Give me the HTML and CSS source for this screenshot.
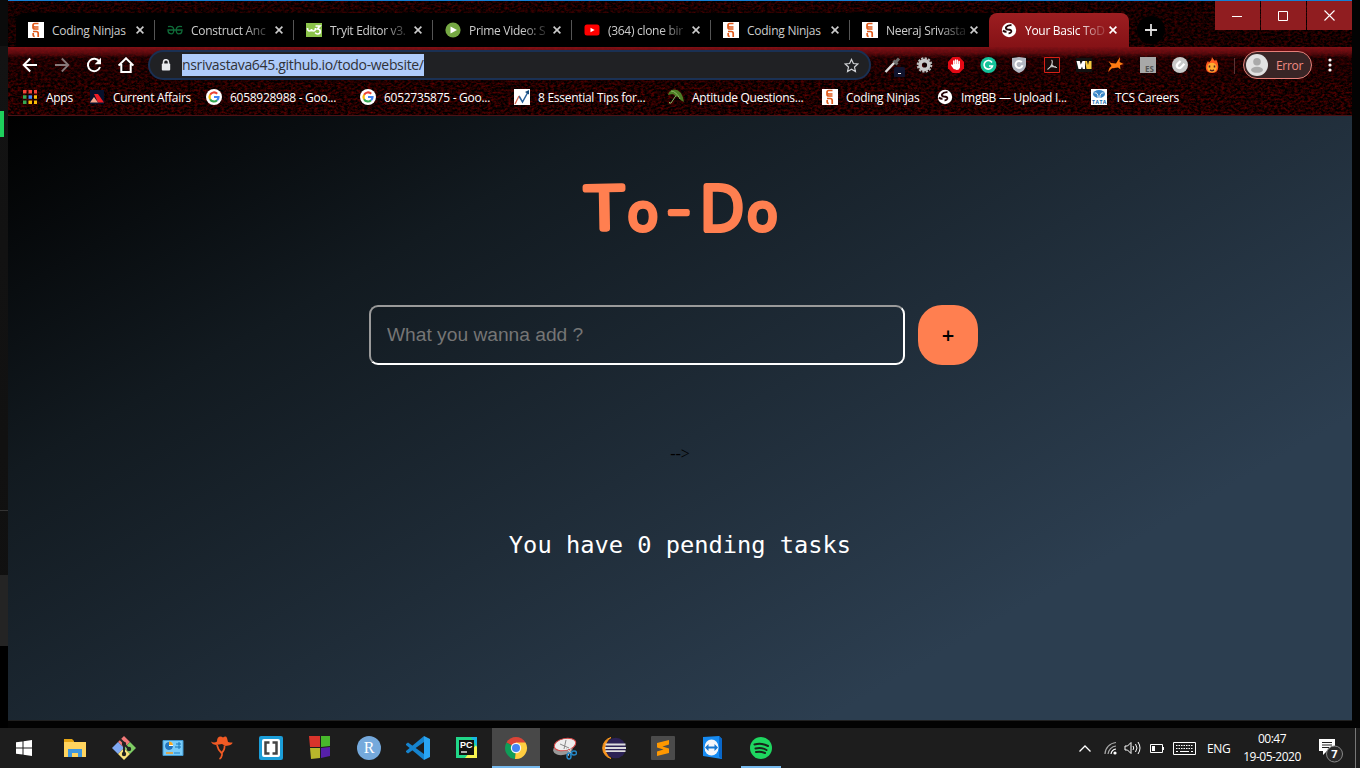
FILE: index.html
```
<!DOCTYPE html>
<html lang="en">
<head>
<meta charset="utf-8">
<title>Your Basic ToDo</title>
<link rel="stylesheet" href="styles.css">
</head>
<body>
<svg class="defs" width="0" height="0">
  <defs>
    <symbol id="ninja" viewBox="0 0 16 16"><path fill="#fff" d="M0 0h16v16H0z"/><path d="M10.500 1.500H6.800Q5 1.500 5 3.200T6.800 5h3.700M5 3.200V5.500Q5 7 6.800 7h3.700M5 9.500h3.200q2 0 2 2V15M5.200 11v2.200q0 1.200 1.500 1.200" fill="none" stroke="#e05a1c" stroke-width="1.700"/></symbol>
    <symbol id="globe" viewBox="0 0 16 16"><circle cx="8" cy="8" r="7.200" fill="#fff"/><path d="M10.500 3.200Q6.500 2.800 5 5.200q-.6 2 2 2.300 3.600.1 3.300 2.200-.6 1.700-2.700 1.500M2 8.500q1.500 1.500 3.500 1.300" fill="none" stroke="#250507" stroke-width="1.900"/></symbol>
    <symbol id="google" viewBox="0 0 16 16"><circle cx="8" cy="8" r="8" fill="#fff"/><g fill="none" stroke-width="2.200"><path stroke="#ea4335" d="M4.100 5.800A4.500 4.500 0 0 1 11.200 4.700"/><path stroke="#fbbc05" d="M4.100 5.800a4.500 4.500 0 0 0 0 4.400"/><path stroke="#34a853" d="M4.100 10.200a4.500 4.500 0 0 0 7 1.100"/><path stroke="#4285f4" d="M11.100 11.300A4.400 4.400 0 0 0 12.500 8H8"/></g></symbol>
    <symbol id="close" viewBox="0 0 8 8"><path d="M.6.6l6.800 6.800M7.400.6L.6 7.400" stroke="currentColor" stroke-width="1.600"/></symbol>
  </defs>
</svg>
<div class="screen">
  <div class="desktop">
    <div class="edge edge-left"><i class="green"></i><i class="line"></i><i class="block"></i></div>
    <main class="window">
      <header class="chrome">
        <svg class="texture" width="1344" height="115">
          <filter id="grain" x="0" y="0" width="100%" height="100%" color-interpolation-filters="sRGB"><feTurbulence type="fractalNoise" baseFrequency=".3 .45" numOctaves="4" seed="8"/><feColorMatrix values=".75 0 0 0 -.26  0 0 0 0 0  0 0 0 0 0  0 0 0 0 1"/></filter>
          <rect width="1344" height="115" filter="url(#grain)"/>
        </svg>
        <div class="tabstrip">
          <nav class="tabs">
            <div class="tab"><svg class="fav"><use href="#ninja"/></svg><span class="title">Coding Ninjas</span><svg class="x"><use href="#close"/></svg></div>
            <div class="tab"><svg class="fav" viewBox="0 0 16 16"><path d="M1 4.700Q6.800 3.500 6.800 8T3.500 11.700Q1 11.500 1 8h14q0 3.700-2.500 3.700Q9.200 12.500 9.200 8T15 4.700" fill="none" stroke="#0f6b38" stroke-width="1.300"/></svg><span class="title fade">Construct Anc</span><svg class="x"><use href="#close"/></svg></div>
            <div class="tab"><svg class="fav" viewBox="0 0 16 16"><path fill="#8bc34a" d="M0 1h16v14H0z"/><path d="M1.500 6q0 3 2 3t2-2q0 2 2 2t2-3M9.500 4H14l-2.700 3q3 0 3 2.400T11.500 12q-1.500 0-2.300-1.300" fill="none" stroke="#fff" stroke-width="1.600"/></svg><span class="title fade">Tryit Editor v3.</span><svg class="x"><use href="#close"/></svg></div>
            <div class="tab"><svg class="fav" viewBox="0 0 16 16"><circle cx="8" cy="8" r="7.600" fill="#75a843"/><path fill="#fff" d="M5.500 4.400L12 8l-6.500 3.600z"/></svg><span class="title fade">Prime Video: S</span><svg class="x"><use href="#close"/></svg></div>
            <div class="tab"><svg class="fav" viewBox="0 0 16 16"><rect x=".5" y="2.500" width="15" height="11" rx="2.500" fill="#f00"/><path fill="#fff" d="M6.500 5.700L10.700 8l-4.200 2.300z"/></svg><span class="title fade">(364) clone bir</span><svg class="x"><use href="#close"/></svg></div>
            <div class="tab"><svg class="fav"><use href="#ninja"/></svg><span class="title">Coding Ninjas</span><svg class="x"><use href="#close"/></svg></div>
            <div class="tab last"><svg class="fav"><use href="#ninja"/></svg><span class="title fade">Neeraj Srivasta</span><svg class="x"><use href="#close"/></svg></div>
            <div class="tab active"><svg class="fav"><use href="#globe"/></svg><span class="title fade">Your Basic ToD</span><svg class="x"><use href="#close"/></svg></div>
          </nav>
          <div class="newtab"><svg width="12" height="12"><path d="M6 0v12M0 6h12" stroke="#ddd" stroke-width="1.800"/></svg></div>
          <div class="controls">
            <b><svg width="10" height="10"><path d="M0 5.500h10" stroke="#fff"/></svg></b>
            <b><svg width="10" height="10"><path d="M.5.5h9v9h-9z" fill="none" stroke="#fff"/></svg></b>
            <b><svg width="11" height="11"><path d="M.5.5l10 10M10.500.5l-10 10" stroke="#fff" stroke-width="1.100"/></svg></b>
          </div>
        </div>
        <div class="toolbar">
          <div class="navs">
            <svg viewBox="0 0 16 16"><path d="M15 8H2M8.200 1.500L1.700 8l6.500 6.500" fill="none" stroke="#fff" stroke-width="2"/></svg>
            <svg viewBox="0 0 16 16"><path d="M1 8h13M7.800 1.500L14.300 8l-6.500 6.500" fill="none" stroke="#88797a" stroke-width="1.800"/></svg>
            <svg viewBox="0 0 16 16"><path d="M13.400 4.700A6.200 6.200 0 1 0 14 10" fill="none" stroke="#fff" stroke-width="2"/><path fill="#fff" d="M15 .8v6.400H8.700z"/></svg>
            <svg viewBox="0 0 16 16"><path d="M.6 8.500L8 1.300l7.400 7.200M3.300 7v8h9.400V7" fill="none" stroke="#fff" stroke-width="2"/></svg>
          </div>
          <div class="omnibox">
            <svg class="lock" width="10" height="12"><path d="M2.500 5V3.200a2.500 2.500 0 0 1 5 0V5" fill="none" stroke="#e8eaed" stroke-width="1.500"/><rect x=".8" y="4.500" width="8.400" height="7" rx="1" fill="#e8eaed"/></svg>
            <span class="url">nsrivastava645.github.io/todo-website/</span>
            <svg class="star" width="15" height="15" viewBox="0 0 16 16"><path d="M8 1.500l2 4.400 4.700.5-3.500 3.200 1 4.800L8 12l-4.200 2.400 1-4.800L1.300 6.400 6 5.900z" fill="none" stroke="#d0d2d5" stroke-width="1.300"/></svg>
          </div>
          <div class="exts">
            <svg viewBox="0 0 24 24"><path d="M4.500 19L14 9" stroke="#ddd" stroke-width="2.500"/><path d="M12.500 7.500l4 4M14 10l4-4.500" stroke="#6c6c6c" stroke-width="3"/><rect x="13" y="14" width="11" height="11" rx="2" fill="#11142e"/><path d="M17 20.500h3" stroke="#fff"/></svg>
            <svg viewBox="0 0 24 24"><circle cx="11.500" cy="12" r="6.800" fill="none" stroke="#bbb" stroke-width="2" stroke-dasharray="2.200 1.360"/><circle cx="11.500" cy="12" r="4.400" fill="none" stroke="#c8c8c8" stroke-width="3.600"/></svg>
            <svg viewBox="0 0 24 24"><path d="M7.700 4h6.600L19 8.700v6.600L14.300 20H7.700L3 15.300V8.700z" fill="#e50914"/><path d="M8.800 12V8M10.600 12V7M12.400 12V7.300M14.200 13V8.500M6.800 12l2.500 3.500" stroke="#fff" stroke-width="1.500" stroke-linecap="round"/><path fill="#fff" d="M8 11h7v3.500q-1 2.700-3.400 2.500-2 0-3.600-3z"/></svg>
            <svg viewBox="0 0 24 24"><circle cx="11.500" cy="12" r="8" fill="#15c39a"/><path d="M15 9.500A4.300 4.300 0 1 0 15.500 13H12" fill="none" stroke="#fff" stroke-width="1.600"/></svg>
            <svg viewBox="0 0 24 24"><path d="M3 5l7-1 7 1v7q0 5-7 8-7-3-7-8z" fill="#b4b8c2"/><path d="M12.800 9.200a3.500 3.500 0 1 0 .7 3" fill="none" stroke="#fff" stroke-width="2"/></svg>
            <svg viewBox="0 0 24 24"><path d="M4.500 4.500h15v15h-15z" fill="#180909" stroke="#d82016"/><path d="M11.500 7q1.500 1 .3 4.500Q11 14 7.500 16.500M11.800 11.500q1.500 3 5.200 3M9 14.500q3-1.500 7-.8" fill="none" stroke="#ccc" stroke-width="1.100"/></svg>
            <svg viewBox="0 0 24 24"><path fill="#111" d="M4 5h16v14H4z"/><path fill="#fff" d="M4.500 8h3.300l1 3.500L10.500 8H13v8h-2.200l-.8-2.500L9 16H6.500z"/><path fill="#f7c93e" d="M13 8h2l1 4 1-4h2.500v8h-5z"/></svg>
            <svg viewBox="0 0 24 24"><path fill="#ff7a12" d="M4.500 8l2.500 2 5 .5 4-6.500-.4 5 4 2-3.600 1.200.5 4.300-2.500-2-6 .8-4 3.700 1.500-4 2-2z"/></svg>
            <svg viewBox="0 0 24 24"><path fill="#a8a8a8" d="M4 4h16v16H4z"/><text x="9" y="18.500" class="es">ES</text></svg>
            <svg viewBox="0 0 24 24"><circle cx="12" cy="12" r="8" fill="#c9c9c9"/><path d="M12.500 8l-3 3q-1.500 2 .3 3.600 1.700 1.200 3.400-.4l3.200-3.400" fill="none" stroke="#fff" stroke-width="2.300"/></svg>
            <svg viewBox="0 0 24 24"><path fill="#ff5a1f" d="M12 4q1 2 3 4l1-1.500Q19 11 18 16q-1 4-6 4t-6-4q-1-4 2-8l1 1.500Q12 7 12 4z"/><circle cx="12" cy="14.500" r="4.800" fill="#ffac31"/><path d="M9.500 12.500v2M14.500 12.500v2M10 17q2 1.300 4 0" fill="none" stroke="#522" stroke-width="1.500"/></svg>
          </div>
          <div class="profile"><svg width="22" height="22"><circle cx="11" cy="11" r="11" fill="#e1e1e1"/><circle cx="11" cy="7.700" r="3.800" fill="#aaa"/><ellipse cx="11" cy="15.800" rx="6" ry="3" fill="#aaa"/></svg><span>Error</span></div>
          <svg class="dots" width="4" height="14"><g fill="#fff"><circle cx="2" cy="2" r="1.600"/><circle cx="2" cy="7" r="1.600"/><circle cx="2" cy="12" r="1.600"/></g></svg>
        </div>
        <div class="bookmarks">
          <a><svg viewBox="0 0 16 16"><path fill="#f44336" d="M1 1h3.500v3.500H1zM6.500 1H10v3.500H6.500zM12 1h3v3.500h-3z"/><path fill="#35a852" d="M1 6.300h3.500v3.500H1zM1 11.500h3.500V15H1z"/><path fill="#4285f4" d="M6.500 6.300H10v3.500H6.500z"/><path fill="#fbbc05" d="M12 6.300h3v3.500h-3zM6.500 11.500H10V15H6.500zM12 11.500h3V15h-3z"/></svg><span>Apps</span></a>
          <a><svg viewBox="0 0 16 16"><path fill="#07102b" d="M1 1h14v14H1z"/><path fill="#ee1c25" d="M5 5h4l6 8.500H9z"/><path fill="#f5a58b" d="M5 8l4 5.500H1z"/></svg><span>Current Affairs</span></a>
          <a><svg><use href="#google"/></svg><span>6058928988 - Goo...</span></a>
          <a><svg><use href="#google"/></svg><span>6052735875 - Goo...</span></a>
          <a><svg viewBox="0 0 16 16"><path fill="#fff" d="M0 0h16v16H0z"/><path d="M5 7l3.500 6L14 3" fill="none" stroke="#28609a" stroke-width="1.500"/><path d="M1 15l4-8" fill="none" stroke="#d26650" stroke-width="1.200"/><path fill="#164b7c" d="M15 1v4.500L11 3z"/></svg><span>8 Essential Tips for...</span></a>
          <a><svg viewBox="0 0 16 16"><path fill="#4d7d25" d="M0 6Q1 1 6 .5q8 0 10 12.500l-3.500-2-1.500-3-3-.5L5 5 2 5.500z"/><path d="M8 6.500l-5 7.500q-2 1-1.500-1M3 2q5 0 9 8" fill="none" stroke="#8cb663"/></svg><span>Aptitude Questions...</span></a>
          <a><svg><use href="#ninja"/></svg><span>Coding Ninjas</span></a>
          <a><svg><use href="#globe"/></svg><span>ImgBB — Upload I...</span></a>
          <a><svg viewBox="0 0 16 16"><path fill="#fff" d="M0 0h16v16H0z"/><ellipse cx="8" cy="5" rx="6" ry="4" fill="#3b87c8"/><path d="M3.500 4Q7 3 7.200 9M12.500 4Q9 3 8.800 9" fill="none" stroke="#fff" stroke-width=".9"/><text x="1" y="14.700" class="tata" textLength="14">TATA</text></svg><span>TCS Careers</span></a>
        </div>
      </header>
      <section class="page">
        <h1 class="heading">
          <svg width="210" height="70">
            <text transform="translate(11.500 53) rotate(-1) scale(1.180 1)" class="cap">T</text>
            <text transform="translate(53.500 54) scale(1.040 1.020)">o</text>
            <text transform="translate(92.500 54) scale(1 .9)" class="dash">-</text>
            <text transform="translate(125.500 54) scale(1.030 1.030)" class="cap">D</text>
            <text transform="translate(173 54) scale(1.040 1.020)">o</text>
          </svg>
        </h1>
        <form class="add"><input type="text" placeholder="What you wanna add ?"><button type="button">+</button></form>
        <p class="arrow">--&gt;</p>
        <p class="pending">You have 0 pending tasks</p>
      </section>
    </main>
  </div>
  <footer class="taskbar">
    <div class="apps">
      <i><svg viewBox="0 0 24 24"><path fill="#fff" d="M4 6.300l6.500-.9v6.100H4zM11.500 5.200L20 4v7.500h-8.500zM4 12.500h6.500v6.100L4 17.700zM11.500 12.500H20V20l-8.500-1.200z"/></svg></i>
      <i><svg viewBox="0 0 24 24"><path fill="#e6a514" d="M1 3h8l2 2v3H1z"/><path fill="#ffd45e" d="M1 6h22v15H1z"/><path fill="#3f97dd" d="M5 13h14v8h-4v-4H9v4H5z"/></svg></i>
      <i><svg viewBox="0 0 24 24"><path fill="#f27978" d="M12 0l6 6-6 6-6-6z"/><path fill="#80a9f3" d="M6 6l6 6-6 6-6-6z"/><path fill="#7fcc64" d="M18 6l6 6-6 6-6-6z"/><path fill="#fbe27b" d="M12 12l6 6-6 6-6-6z"/><path d="M8 3l4 4v11M12 8l5 5" fill="none" stroke="#262626" stroke-width="2"/><circle cx="12" cy="8" r="2.200" fill="#222"/><circle cx="17" cy="13" r="2.200" fill="#222"/><circle cx="12" cy="18" r="2.200" fill="#222"/></svg></i>
      <i><svg viewBox="0 0 24 24"><path fill="#79ccfa" stroke="#4099d1" d="M2 4.500h20v15H2z"/><circle cx="8" cy="10" r="4" fill="#fff"/><path d="M8 10V6a4 4 0 1 0 4 4z" fill="#2175be"/><path d="M8 9V5.500A4 4 0 0 1 12 9z" fill="#f7aa24"/><path d="M15 8h5M14 11h6M18 6v7" stroke="#1976b8"/><path d="M5 17h7" stroke="#f39b22" stroke-width="1.500"/><path d="M13 17h6" stroke="#237fc0"/></svg></i>
      <i><svg viewBox="0 0 24 24"><path fill="#f15a24" d="M1 5.500q3 2 6 0 0-4.500 3-5 2 0 3 1 3-2 4 .5l1 4q2 .5 4.500.5 0 2-4 3l-3 .5L12 8 6 9Q2 8.500 1 5.500z"/><path d="M7 9q1 5 4.500 8Q15 14 14.500 9.500M12 16v3q-.5 3-2.500 4" fill="none" stroke="#f15a24" stroke-width="1.700"/></svg></i>
      <i><svg viewBox="0 0 24 24"><rect width="24" height="24" rx="2" fill="#1b9ed9"/><rect x="3" y="3" width="18" height="18" rx="2" fill="#fff"/><path d="M10.500 6.500h-4v11h4M13.500 6.500h4v11h-4" fill="none" stroke="#454545" stroke-width="2.500"/></svg></i>
      <i><svg viewBox="0 0 24 24"><path fill="#d9342b" d="M1 0h11v11H2z"/><path fill="#48b82b" d="M13 0h9v10l-9 1z"/><path fill="#b9b72b" d="M2 12h10v10l-9 1z"/><path fill="#5620a8" d="M13 12l9-1v9l-9 2z"/></svg></i>
      <i><svg viewBox="0 0 24 24"><circle cx="12" cy="12" r="12" fill="#75a9dc"/><text x="12" y="17" class="r">R</text></svg></i>
      <i><svg viewBox="0 0 24 24"><path fill="#1684cf" d="M0 8l2-1.500L18 18v6L0 9z"/><path fill="#1684cf" d="M0 16l2 1.500L18 6V0L0 15z"/><path fill="#29a5f3" d="M18 0l6 3v18l-6 3z"/></svg></i>
      <i><svg viewBox="0 0 24 24"><path fill="#21d789" d="M1 1h21v21H1z"/><path fill="#f7f34f" d="M22 8v14H10z"/><path fill="#18b7e6" d="M16 1h6v10z"/><path fill="#111" d="M4 4h15v15H4z"/><text x="5" y="11.500" class="pc">PC</text><path d="M6 16h6" stroke="#fff" stroke-width="1.300"/></svg></i>
      <i class="current"><svg viewBox="0 0 24 24"><path fill="#db4437" d="M12 12L2.500 6.500a11 11 0 0 1 19 0z"/><path fill="#0f9d58" d="M12 12l-1 11A11 11 0 0 1 2.500 6.500z"/><path fill="#ffcd40" d="M12 12V6.500h9.500A11 11 0 0 1 11 23z"/><circle cx="12" cy="12" r="5.200" fill="#f5f5f5"/><circle cx="12" cy="12" r="4" fill="#4285f4"/></svg></i>
      <i><svg viewBox="0 0 24 24"><ellipse cx="10" cy="13" rx="10" ry="6" fill="#999" transform="rotate(-12 10 13)"/><ellipse cx="12" cy="8.500" rx="11" ry="6" fill="#eee" stroke="#d94a4a" transform="rotate(-12 12 8.500)"/><path d="M7 8l9 4M13 4l-2 9" stroke="#888"/><path d="M13 12l7 7M18 12l-3 8" stroke="#ccc"/><ellipse cx="16" cy="20" rx="2" ry="3" fill="none" stroke="#2688c8" stroke-width="1.500"/><ellipse cx="21" cy="17" rx="2.500" ry="2" fill="none" stroke="#2688c8" stroke-width="1.500"/></svg></i>
      <i><svg viewBox="0 0 24 24"><path d="M9 1.500A10.800 10.800 0 0 0 9 22.500 12.500 12.500 0 0 1 9 1.500z" fill="#f7941e" stroke="#f7941e"/><circle cx="13.700" cy="12" r="10.300" fill="#2c2255"/><path fill="#ddd" d="M3.500 7.500h20v2h-20zM3 11h21v2H3zM3.500 14.300h20v1.700h-20z"/></svg></i>
      <i><svg viewBox="0 0 24 24"><rect width="24" height="24" rx="1" fill="#4b4b4b"/><path fill="#ff9800" d="M6 7l12-3v4.500L11.500 10.500 18 12.500V17L6 20v-4.500l6.500-2L6 11.500z"/></svg></i>
      <i><svg viewBox="0 0 24 24"><path fill="#168bf2" d="M3 1l16-1 3 3v20L3 20z"/><path fill="#0967c9" d="M19 0l3 3v20l-3-2z"/><ellipse cx="11.500" cy="11.500" rx="7" ry="8" fill="#f4f6fa"/><path fill="#1576d1" d="M5 11.500l3.500-3.500v2.500h6V8l3.500 3.500-3.500 3.500v-2.500h-6V15z"/></svg></i>
      <i class="running"><svg viewBox="0 0 24 24"><circle cx="12" cy="12" r="11" fill="#1ed760"/><path d="M5.500 8.500q7-2 13.500 1.500M6.500 12.500q6-1.500 11 1.500M7 16q5-1 9 1" fill="none" stroke="#18251b" stroke-width="2" stroke-linecap="round"/></svg></i>
    </div>
    <div class="tray">
      <svg width="12" height="7"><path d="M.5 6.500l5.500-5.500 5.500 5.500" fill="none" stroke="#fff" stroke-width="1.300"/></svg>
      <svg class="wifi" width="13" height="14"><g fill="none" stroke="#aaa" stroke-width="1.200"><path d="M1 13A12 12 0 0 1 12 1.500M4 13a9 9 0 0 1 8-8"/><path stroke="#fff" d="M7 13a6 6 0 0 1 5-5"/></g><circle cx="11" cy="12" r="1.600" fill="#fff"/></svg>
      <svg class="sound" width="17" height="14"><path d="M1 5h2.500L7 1.500v11L3.500 9H1zM9 5q1.500 2 0 4M11.500 3q3 4 0 8M14 1q4 6 0 12" fill="none" stroke="#fff"/></svg>
      <svg class="battery" width="15" height="9"><path d="M.5.5h12v8H.5zM13.500 3v3" fill="none" stroke="#fff"/><path fill="#fff" d="M2 2h3v5H2z"/></svg>
      <svg class="keyboard" width="23" height="13"><path d="M.5.5h22v12H.5z" fill="none" stroke="#fff"/><path d="M3 3.500h17M3 6.500h17" stroke="#fff" stroke-dasharray="1.500 1"/><path d="M3 9.500h2M7 9.500h9M18 9.500h2" stroke="#fff"/></svg>
      <span class="lang">ENG</span>
      <time class="clock"><span>00:47</span><span>19-05-2020</span></time>
      <svg class="notify" width="26" height="26"><path fill="#fff" d="M0 1h16v12H8l-4 4v-4H0z"/><path d="M3 4.500h10M3 7h10M3 9.500h7" stroke="#222"/><circle cx="15.500" cy="16" r="8" fill="#292929" stroke="#888"/><text x="15.500" y="20" class="badge">7</text></svg>
      <i class="peek"></i>
    </div>
  </footer>
</div>
</body>
</html>
```
FILE: styles.css
```
* { box-sizing: border-box; }
body { margin: 0; background: #000; font-family: "Open Sans", "Noto Sans", sans-serif; font-size: 12px; color: #fff; overflow: hidden; }
svg { display: block; flex: none; }
.defs { position: absolute; }
.screen { width: 1360px; height: 768px; display: flex; flex-direction: column; }
.desktop { height: 728px; display: flex; background: #030303; }
.edge-left { width: 8px; height: 728px; background: linear-gradient(#0b0b0b 46px, #131313 46px, #101010 646px, #000 646px); }
.edge-left i { display: block; }
.edge-left .green { width: 4px; height: 26px; margin-top: 111px; background: #1ed05c; }
.edge-left .line { height: 1px; margin-top: 373px; background: #333; }
.edge-left .block { height: 71px; margin-top: 64px; background: #242424; }
.window { width: 1344px; height: 721px; border-bottom: 1px solid #202020; }

.chrome { position: relative; height: 116px; background: #0a0001; border-top: 1px solid #1580d5; display: flex; flex-direction: column; }
.texture { position: absolute; left: 0; top: 0; height: 115px; }
.tabstrip, .toolbar, .bookmarks { position: relative; display: flex; }
.chrome::after { content: ""; position: absolute; inset: auto 0 0; height: 1px; background: #4a1215; }
.tabstrip { height: 46px; padding-left: 8px; align-items: flex-end; background: linear-gradient(90deg, #0004, #0003 60%, #0004); }
.tabs { display: flex; height: 34px; background: #000; border-radius: 8px 8px 0 0; }
.tab { position: relative; width: 139px; height: 34px; padding-left: 12px; display: flex; align-items: center; color: #ccc; border-radius: 8px 8px 0 0; }
.tab:not(.last):not(.active)::after { content: ""; position: absolute; right: 0; top: 7px; width: 1px; height: 20px; background: #555; }
.fav { width: 16px; height: 16px; margin-right: 8px; }
.title { width: 80px; margin-right: 4px; white-space: nowrap; letter-spacing: -.25px; }
.fade { letter-spacing: -.3px; -webkit-mask-image: linear-gradient(90deg, #000 66%, #0003 96%); mask-image: linear-gradient(90deg, #000 66%, #0003 96%); }
.x { width: 8px; height: 8px; }
.tab.active { width: 140px; color: #fff; background: linear-gradient(#9d1e21, #851216); }
.newtab { width: 28px; height: 28px; margin: 0 0 3px 8px; background: #000; border-radius: 50%; display: flex; align-items: center; justify-content: center; }
.controls { display: flex; margin-left: auto; align-self: flex-start; gap: 1px; height: 29px; }
.controls b { width: 45px; background: #901d20; display: flex; align-items: center; justify-content: center; }
.controls b:first-child svg { margin-right: 2px; }
.controls b:nth-child(2) svg { margin-right: 2px; }

.toolbar { height: 36px; align-items: center; background: linear-gradient(#8c1218e6, #700d12c0 6px, #28000360 11px, #10000130 100%); }
.navs { display: flex; gap: 16px; padding-left: 14px; }
.navs svg { width: 16px; height: 16px; }
.omnibox { width: 723px; height: 30px; margin-left: 14px; border: 2px solid #1a3053; border-radius: 15px; background: #202124; display: flex; align-items: center; padding: 0 10px 0 11px; }
.url { height: 22px; line-height: 22px; font-size: 14px; letter-spacing: -.33px; background: #aecbfa; color: #303238; margin-left: 11px; white-space: nowrap; width: 242px; }
.star { margin-left: auto; }
.exts { display: flex; gap: 7.900px; margin-left: 10px; }
.exts svg { width: 24px; height: 24px; }
.es { font: bold 8px "Open Sans", sans-serif; fill: #555; }
.profile { width: 69px; height: 28px; margin-left: 19px; border: 1px solid #e68079; border-radius: 14px; background: #392526; display: flex; align-items: center; padding-left: 2px; color: #f28b82; position: relative; }
.profile::before { content: ""; position: absolute; left: -10px; top: 6px; width: 1px; height: 16px; background: #5a3436; }
.profile span { margin-left: 8px; letter-spacing: -.3px; }
.dots { margin-left: 16px; }
.bookmarks { height: 32px; display: grid; grid-template-columns: 67px 117px 154px 154px 154px 154px 115px 154px 110px; padding: 0 0 4px 14px; align-items: center; }
.bookmarks a { display: flex; align-items: center; gap: 8px; white-space: nowrap; letter-spacing: -.28px; }
.bookmarks svg { width: 16px; height: 16px; }
.tata { font: bold 5px "Open Sans", sans-serif; fill: #1767ad; }

.page { height: 604px; background: linear-gradient(150deg, #000 0, #121a20 26%, #2c3e50 78%); display: flex; flex-direction: column; align-items: center; }
.heading { margin: 60px 0 0; height: 70px; }
.heading svg { overflow: visible; }
.heading text { font: 300 47px "Open Sans", sans-serif; fill: #ff7f50; stroke: #ff7f50; stroke-width: 6px; stroke-linejoin: round; }
.heading .cap { font-size: 59px; }
.heading .dash { font-size: 70px; stroke-width: 5px; }
.add { display: flex; margin: 59px 0 0; padding-right: 13px; gap: 13px; }
.add input { width: 536px; height: 60px; padding: 0 16px; border: 2px solid; border-color: #9a9a9a #fff #fff #9a9a9a; border-radius: 9px; background: transparent; font: 19.200px "Liberation Sans", Arial, sans-serif; color: #fff; }
.add input::placeholder { color: #757575; opacity: 1; }
.add button { width: 60px; height: 60px; border: 0; border-radius: 24px; background: #ff7f50; color: #000; font: 600 22px "Open Sans", sans-serif; padding: 0 0 2px; }
.arrow { margin: 80px 0 0; font: 16px/18px "Liberation Serif", serif; color: #000; }
.pending { margin: 66px 0 0; font: 23.700px/32px "DejaVu Sans Mono", monospace; white-space: nowrap; }

.taskbar { height: 40px; background: #1d1d1d; display: flex; justify-content: space-between; }
.apps { display: grid; grid-template-columns: 49.500px repeat(15, 49px); padding-left: .6px; }
.apps i { display: flex; align-items: center; justify-content: center; height: 40px; position: relative; }
.apps i:first-child { padding-right: 2px; }
.apps svg { width: 24px; height: 24px; }
.apps .current { background: #484848; border-bottom: 2px solid #76b9ed; padding-top: 2px; margin-left: 1px; }
.running::after { content: ""; position: absolute; left: 5px; right: 4px; bottom: 0; height: 2px; background: #76b9ed; }
.r { font: 16px "Liberation Serif", serif; fill: #fff; text-anchor: middle; }
.pc { font: bold 9px "Liberation Sans", sans-serif; fill: #fff; }
.tray { display: flex; align-items: center; }
.wifi { margin-left: 13px; }
.sound { margin-left: 7px; }
.battery { margin-left: 9px; }
.keyboard { margin-left: 8px; }
.lang { margin-left: 11px; width: 24px; letter-spacing: -.4px; }
.clock { width: 60px; margin-left: 11px; display: flex; flex-direction: column; align-items: center; line-height: 18px; letter-spacing: -.5px; white-space: nowrap; }
.notify { margin: 6px 0 0 17px; }
.badge { font: bold 11px "Open Sans", sans-serif; fill: #fff; text-anchor: middle; }
.peek { width: 1px; height: 40px; background: #777; margin: 0 4px 0 10px; }
```
